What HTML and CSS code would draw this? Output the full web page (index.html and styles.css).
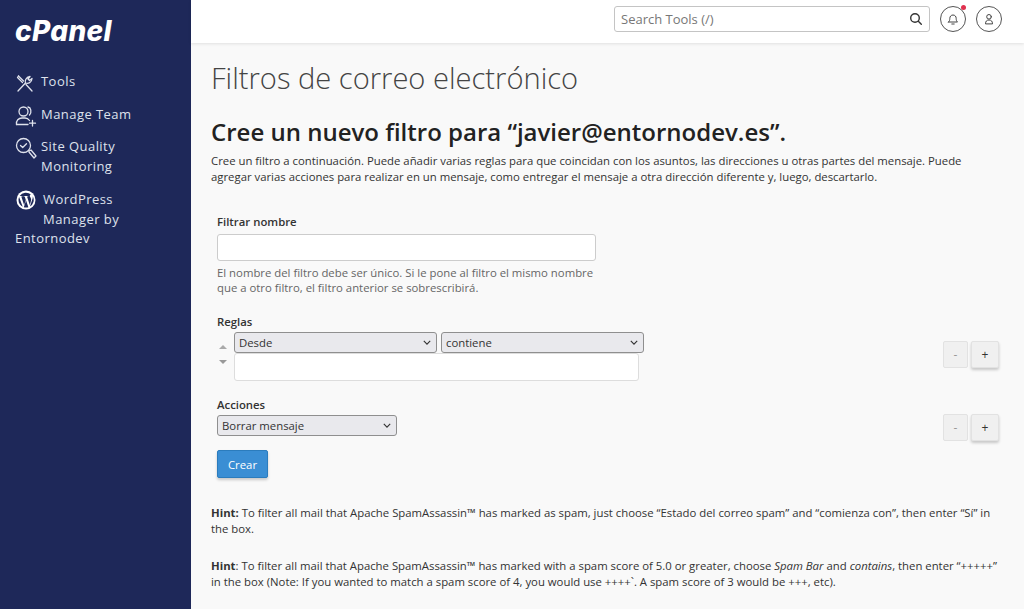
FILE: index.html
```html
<!DOCTYPE html>
<html lang="es">
<head>
    <meta charset="UTF-8">
    <meta name="viewport" content="width=device-width, initial-scale=1.0">
    <title>Filtros de correo electrónico</title>
    <link rel="stylesheet" href="styles.css">
</head>
<body>

<div class="layout">
    <aside class="sidebar">
        <div class="logo">cPanel</div>
        <nav class="nav">
            <a class="nav-item nav-tools">
                <svg class="nav-icon" viewBox="0 0 20 20" fill="none" stroke="currentColor" stroke-width="1.3" stroke-linecap="round" stroke-linejoin="round">
                    <path d="M3 18 10.500 10"/>
                    <path d="M10.500 10c-.8-2 .2-6 4.500-6.500L13 6l1.500 1.500L17 5.500c-.2 4-3.800 5.500-6.500 4.500z"/>
                    <path d="M3.500 3 2.500 4.500l5 5"/>
                    <path d="M3.500 3l5 5M11 11.500l6 6.500"/>
                </svg>
                <span>Tools</span>
            </a>
            <a class="nav-item nav-team">
                <svg class="nav-icon" viewBox="0 0 22 22" fill="none" stroke="currentColor" stroke-width="1.3" stroke-linecap="round" stroke-linejoin="round">
                    <circle cx="8.500" cy="6.500" r="4.500"/>
                    <path d="M13 2c3 .5 4 5 1.500 8"/>
                    <path d="M1.500 19.500c-.5-4 2-6.500 5.500-6.500h3c2 0 3.500 1 4.500 2.500"/>
                    <path d="M1.500 19.500h11.500"/>
                    <path d="M17.500 15.500v5.500M14.500 18.200h6"/>
                </svg>
                <span>Manage Team</span>
            </a>
            <a class="nav-item nav-quality">
                <svg class="nav-icon" viewBox="0 0 22 22" fill="none" stroke="currentColor" stroke-width="1.3" stroke-linecap="round" stroke-linejoin="round">
                    <circle cx="8.500" cy="8.500" r="7"/>
                    <path d="m5.500 8.500 2.200 2 3.800-3.800"/>
                    <path d="m14 14 2-1 5 6-2 2-5-6z"/>
                </svg>
                <span>Site Quality<br>Monitoring</span>
            </a>
            <a class="nav-item nav-wp">
                <svg class="wp-icon" viewBox="0 0 20 20">
                    <circle cx="10" cy="10" r="9.500" fill="#fff"/>
                    <path fill="#1e2859" d="M2.500 10c0 3 1.700 5.500 4.200 6.700L3.100 7A7.500 7.500 0 0 0 2.500 10zm12.600-.4c0-.9-.3-1.600-.6-2.100-.4-.6-.7-1.100-.7-1.600 0-.7.500-1.300 1.200-1.300A7.500 7.500 0 0 0 3.700 6h.5c.8 0 2-.1 2-.1.400 0 .5.600 0 .6 0 0-.4.100-.9.100l2.800 8.400 1.700-5.100L8.700 6.600c-.4 0-.8-.1-.8-.1-.4 0-.4-.6 0-.6 0 0 1.300.1 2 .1.800 0 2-.1 2-.1.400 0 .5.600 0 .6 0 0-.4.100-.9.100l2.800 8.300.8-2.600c.3-1.100.5-1.900.5-2.700zM10.100 10.600l-2.300 6.700a7.500 7.500 0 0 0 4.600-.1l-.1-.1-2.200-6.500zm6.600-4.400c0 .3.100.5.100.8 0 .8-.1 1.600-.6 2.800l-2.300 6.700A7.500 7.500 0 0 0 16.700 6.200z"/>
                </svg>
                <span>WordPress</span>
                <span class="wp-line2">Manager by</span>
                <span class="wp-line3">Entornodev</span>
            </a>
        </nav>
    </aside>

    <div class="right">
        <header class="topbar">
            <div class="search">
                <span class="search-text">Search Tools (/)</span>
                <svg class="search-icon" viewBox="0 0 14 14" fill="none" stroke="#333" stroke-width="1.400" stroke-linecap="round">
                    <circle cx="6" cy="6" r="4.300"/>
                    <path d="m9.300 9.300 3 3"/>
                </svg>
            </div>
            <button class="round-btn">
                <svg viewBox="0 0 14 14" fill="none" stroke="#444" stroke-width="1" stroke-linejoin="round" stroke-linecap="round">
                    <path d="M2.500 10h9c-1-1-1.300-1.800-1.300-3.500C10.200 4.500 9 3 7 3S3.800 4.500 3.800 6.500C3.800 8.200 3.500 9 2.500 10z"/>
                    <path d="M5.800 12h2.400"/>
                </svg>
                <span class="dot"></span>
            </button>
            <button class="round-btn">
                <svg viewBox="0 0 14 14" fill="none" stroke="#444" stroke-width="1" stroke-linecap="round">
                    <circle cx="7" cy="4.800" r="2.300"/>
                    <path d="M3.500 11.500c0-2.200 1.200-3.500 3.500-3.500s3.500 1.300 3.500 3.500z"/>
                </svg>
            </button>
        </header>

        <main class="content">
            <h1>Filtros de correo electrónico</h1>
            <h2>Cree un nuevo filtro para “javier@entornodev.es”.</h2>
            <p class="intro">Cree un filtro a continuación. Puede añadir varias reglas para que coincidan con los asuntos, las direcciones u otras partes del mensaje. Puede agregar varias acciones para realizar en un mensaje, como entregar el mensaje a otra dirección diferente y, luego, descartarlo.</p>

            <form class="filter-form">
                <label class="field-label" for="filterName">Filtrar nombre</label>
                <input class="name-input" type="text" id="filterName">
                <p class="help">El nombre del filtro debe ser único. Si le pone al filtro el mismo nombre<br>que a otro filtro, el filtro anterior se sobrescribirá.</p>

                <div class="field-label rules-label">Reglas</div>
                <div class="rule-row">
                    <div class="arrows">
                        <span class="arrow-up"></span>
                        <span class="arrow-down"></span>
                    </div>
                    <div class="rule-fields">
                        <div class="rule-selects">
                            <div class="select select-from">Desde<svg class="chev" viewBox="0 0 10 6"><path d="m1 1 4 4 4-4" fill="none" stroke="#333" stroke-width="1.400"/></svg></div>
                            <div class="select select-match">contiene<svg class="chev" viewBox="0 0 10 6"><path d="m1 1 4 4 4-4" fill="none" stroke="#333" stroke-width="1.400"/></svg></div>
                        </div>
                        <input class="rule-input" type="text">
                    </div>
                    <div class="pm">
                        <button type="button" class="pm-btn minus">-</button>
                        <button type="button" class="pm-btn plus">+</button>
                    </div>
                </div>

                <div class="field-label actions-label">Acciones</div>
                <div class="action-row">
                    <div class="select select-action">Borrar mensaje<svg class="chev" viewBox="0 0 10 6"><path d="m1 1 4 4 4-4" fill="none" stroke="#333" stroke-width="1.400"/></svg></div>
                    <div class="pm">
                        <button type="button" class="pm-btn minus">-</button>
                        <button type="button" class="pm-btn plus">+</button>
                    </div>
                </div>

                <button type="button" class="create-btn">Crear</button>
            </form>

            <p class="hint"><b>Hint:</b> To filter all mail that Apache SpamAssassin™ has marked as spam, just choose “Estado del correo spam” and “comienza con”, then enter “Sí” in the box.</p>
            <p class="hint hint-second"><b>Hint</b>: To filter all mail that Apache SpamAssassin™ has marked with a spam score of 5.0 or greater, choose <i>Spam Bar</i> and <i>contains</i>, then enter “+++++” in the box (Note: If you wanted to match a spam score of 4, you would use ++++`. A spam score of 3 would be +++, etc).</p>
        </main>
    </div>
</div>

</body>
</html>
```

FILE: styles.css
```css
* {
    box-sizing: border-box;
}

html, body {
    margin: 0;
    height: 609px;
    overflow: hidden;
}

body {
    font-family: "Open Sans", Arial, sans-serif;
    font-size: 11.35px;
    color: #333;
    background-color: #f9f9f9;
}

.layout {
    display: flex;
    height: 609px;
}

.sidebar {
    width: 191px;
    flex-shrink: 0;
    background-color: #1e2859;
    color: #dfe2ec;
    font-size: 13px;
    letter-spacing: 0.45px;
}

.logo {
    padding: 16px 0 0 15px;
    height: 72px;
    font-family: "Inter", Arial, sans-serif;
    font-size: 28px;
    line-height: 30px;
    font-weight: 800;
    font-style: italic;
    letter-spacing: 0.3px;
    color: #fff;
}

.nav-item {
    display: block;
    position: relative;
    line-height: 19.5px;
}

.nav-tools {
    padding-left: 41px;
}

.nav-team {
    margin-top: 13px;
    padding-left: 41px;
}

.nav-quality {
    margin-top: 13px;
    padding-left: 41px;
}

.nav-wp {
    margin-top: 14px;
    padding-left: 43px;
}

.nav-item span {
    display: block;
}

.nav-wp .wp-line3 {
    margin-left: -28px;
}

.nav-icon {
    position: absolute;
    left: 15px;
    top: 1px;
    width: 20px;
    height: 20px;
}

.nav-team .nav-icon, .nav-quality .nav-icon {
    width: 22px;
    height: 22px;
    top: 0;
}

.wp-icon {
    position: absolute;
    left: 16px;
    top: 0;
    width: 20px;
    height: 20px;
}

.right {
    flex: 1;
    min-width: 0;
}

.topbar {
    height: 43px;
    display: flex;
    justify-content: flex-end;
    align-items: flex-start;
    padding: 6px 22px 0 0;
    background-color: #fff;
    box-shadow: 0 1px 3px rgba(0, 0, 0, 0.1);
}

.search {
    width: 316px;
    height: 26px;
    display: flex;
    align-items: center;
    justify-content: space-between;
    padding: 0 6px;
    border: 1px solid #c4c4c4;
    border-radius: 3px;
    margin-right: 10px;
    font-size: 13px;
    color: #777;
}

.search-icon {
    width: 14px;
    height: 14px;
}

.round-btn {
    position: relative;
    width: 26px;
    height: 26px;
    padding: 5px;
    margin-left: 0;
    border: 1px solid #555;
    border-radius: 50%;
    background-color: #fff;
}

.round-btn + .round-btn {
    margin-left: 10px;
}

.round-btn svg {
    display: block;
    width: 14px;
    height: 14px;
}

.dot {
    position: absolute;
    top: -2px;
    right: -1px;
    width: 5px;
    height: 5px;
    border-radius: 50%;
    background-color: #e0314f;
}

.content {
    padding: 0 20px 0 20px;
}

h1 {
    margin: 17px 0 0;
    font-size: 29.1px;
    line-height: 36px;
    font-weight: 300;
    color: #444;
}

h2 {
    margin: 21px 0 0;
    font-size: 24px;
    line-height: 30px;
    font-weight: 600;
    color: #222;
}

.intro {
    margin: 6px 0 0;
    line-height: 16px;
}

.filter-form {
    margin-top: 29px;
    padding-left: 6px;
}

.field-label {
    display: block;
    font-weight: 600;
    line-height: 16px;
    color: #333;
}

.name-input {
    display: block;
    width: 379px;
    height: 27px;
    margin-top: 4px;
    border: 1px solid #ccc;
    border-radius: 3px;
    background-color: #fff;
}

.help {
    margin: 4px 0 0;
    line-height: 15px;
    color: #666;
}

.rules-label {
    margin-top: 19px;
}

.rule-row {
    display: flex;
    position: relative;
    margin-top: 2px;
}

.arrows {
    width: 17px;
    padding-top: 13px;
    padding-left: 2px;
}

.arrow-up, .arrow-down {
    display: block;
    width: 0;
    height: 0;
    border-left: 4px solid transparent;
    border-right: 4px solid transparent;
}

.arrow-up {
    border-bottom: 4px solid #aaa;
}

.arrow-down {
    margin-top: 11px;
    border-top: 4px solid #999;
}

.rule-selects {
    display: flex;
    gap: 4px;
}

.select {
    display: flex;
    align-items: center;
    justify-content: space-between;
    height: 21px;
    padding: 0 5px 0 4px;
    border: 1px solid #8f8f8f;
    border-radius: 3px;
    background-color: #e9e9ed;
    color: #333;
}

.select-from {
    width: 203px;
}

.select-match {
    width: 203px;
}

.select-action {
    width: 180px;
}

.chev {
    width: 8px;
    height: 5px;
}

.rule-input {
    display: block;
    width: 405px;
    height: 28px;
    border: 1px solid #ddd;
    border-radius: 3px;
    background-color: #fff;
}

.pm {
    position: absolute;
    right: 5px;
    top: 9px;
    display: flex;
    gap: 3px;
}

.pm-btn {
    width: 25px;
    height: 27px;
    padding: 0;
    border: 1px solid #e2e2e2;
    border-radius: 2px;
    background-color: #f0f0f0;
    font-family: "Open Sans", Arial, sans-serif;
    font-size: 12px;
    color: #999;
}

.pm-btn.plus {
    width: 28px;
    color: #333;
    box-shadow: 0 2px 3px rgba(0, 0, 0, 0.2);
}

.actions-label {
    margin-top: 16px;
}

.action-row {
    position: relative;
    margin-top: 2px;
}

.action-row .pm {
    top: -1px;
}

.create-btn {
    display: block;
    width: 51px;
    height: 28px;
    margin-top: 14px;
    padding: 0;
    border: 1px solid #2b7cbd;
    border-radius: 2px;
    background-color: #3a8ed4;
    box-shadow: 0 2px 3px rgba(0, 0, 0, 0.2);
    font-family: "Open Sans", Arial, sans-serif;
    font-size: 11.35px;
    color: #fff;
}

.hint {
    margin: 27px 0 0;
    line-height: 16px;
}

.hint-second {
    margin-top: 21px;
}
```
